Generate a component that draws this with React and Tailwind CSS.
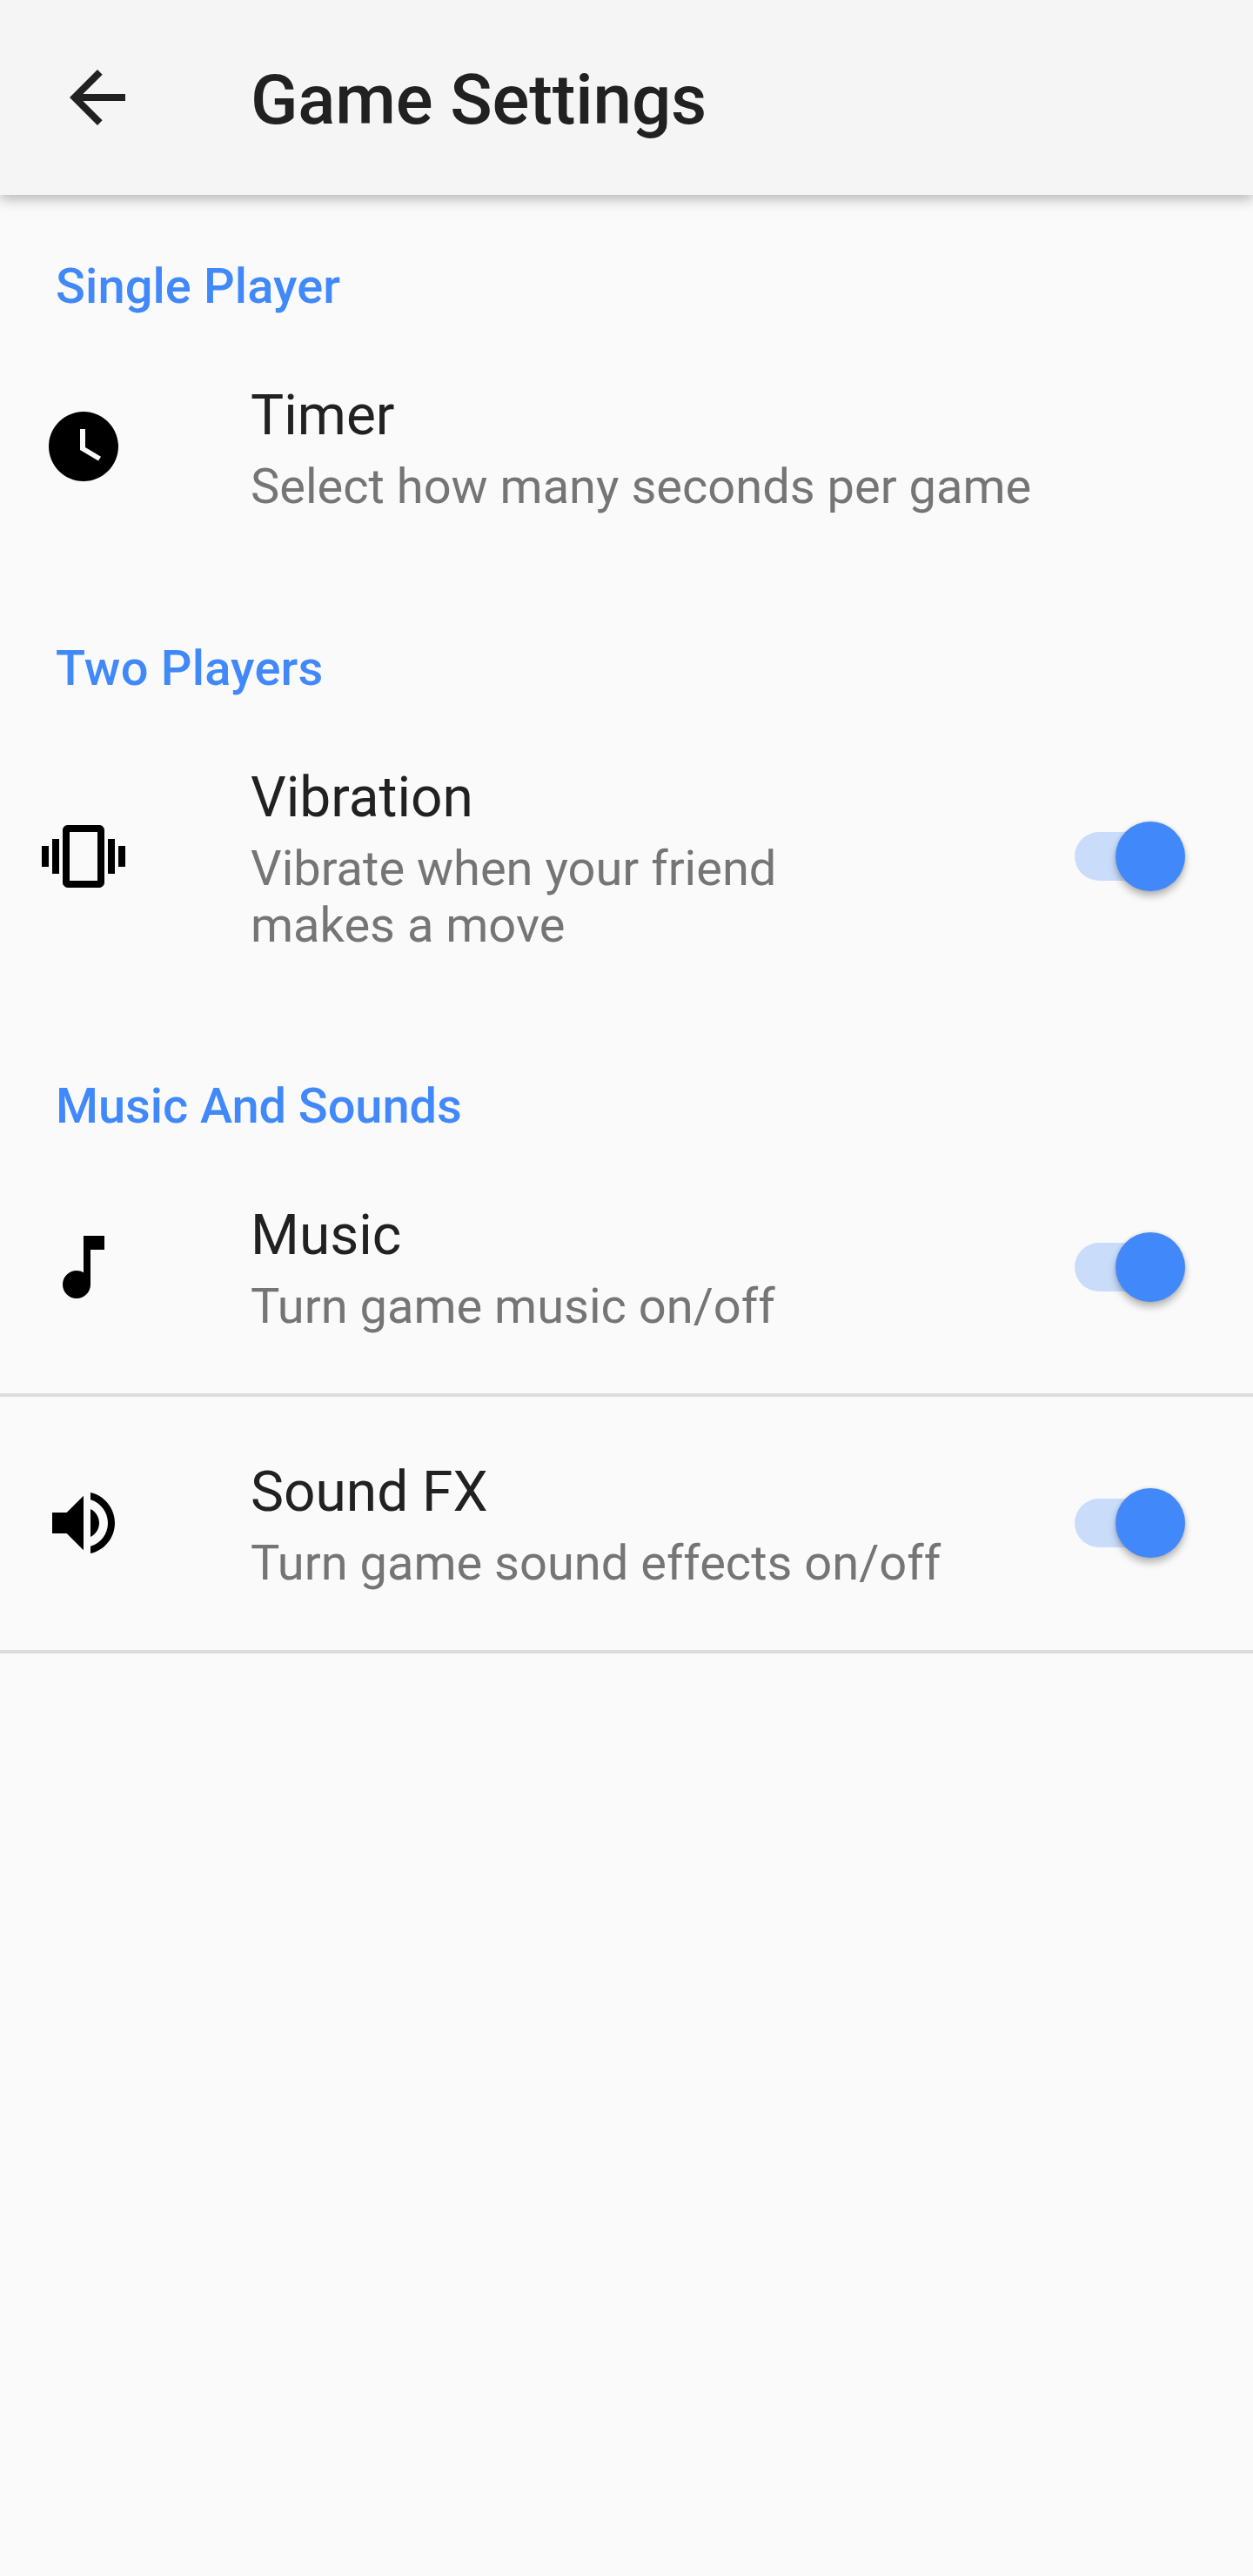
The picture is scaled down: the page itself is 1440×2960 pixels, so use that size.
const ICONS = {
  back: 'M20 11H7.83l5.59-5.59L12 4l-8 8 8 8 1.41-1.41L7.83 13H20v-2z',
  clock:
    'M12 2C6.5 2 2 6.5 2 12s4.5 10 10 10 10-4.5 10-10S17.5 2 12 2zm4.25 14.15L11 13V7h1.5v5.25l4.5 2.67-.75 1.23z',
  vibration:
    'M0 15h2V9H0v6zm3 2h2V7H3v10zm19-8v6h2V9h-2zm-3 8h2V7h-2v10zM16.5 3h-9C6.67 3 6 3.67 6 4.5v15c0 .83.67 1.5 1.5 1.5h9c.83 0 1.5-.67 1.5-1.5v-15c0-.83-.67-1.5-1.5-1.5zM16 19H8V5h8v14z',
  note: 'M12 3v10.55c-.59-.34-1.27-.55-2-.55-2.21 0-4 1.79-4 4s1.79 4 4 4 4-1.79 4-4V7h4V3h-6z',
  volume:
    'M3 9v6h4.17L12 19.83V4.17L7.17 9H3zm13.5 3c0-1.77-1.02-3.29-2.5-4.03v8.05c1.48-.73 2.5-2.25 2.5-4.02zM14 3.23v2.06c2.89.86 5 3.54 5 6.71s-2.11 5.85-5 6.71v2.06c4.01-.91 7-4.49 7-8.77s-2.99-7.86-7-8.77z',
};

function Icon({ name }) {
  return (
    <svg viewBox="0 0 24 24" className="size-24 shrink-0 fill-current" aria-hidden="true">
      <path d={ICONS[name]} />
    </svg>
  );
}

function Switch() {
  return (
    <button
      role="switch"
      aria-checked="true"
      className="mr-[78px] flex h-14 w-[127.5px] shrink-0 items-center justify-end rounded-full bg-[#c9ddfb]"
    >
      <span className="size-20 shrink-0 rounded-full bg-[#4189fa] shadow-[0_6px_8px_rgba(0,0,0,0.26),0_0_4px_rgba(0,0,0,0.12)]" />
    </button>
  );
}

function Category({ tracking, children }) {
  return (
    <h2
      className={`h-36 pt-[72px] pl-16 text-[56px] leading-[66px] font-medium text-[#4189fa] ${tracking}`}
    >
      {children}
    </h2>
  );
}

function Row({ icon, title, toggle, divider, children }) {
  return (
    <div className={divider ? 'border-b-4 border-[#dcdcdc]' : 'border-b-4 border-transparent'}>
      <div className="flex items-center pl-12">
        <div className="mr-36 text-black">
          <Icon name={icon} />
        </div>
        <div className="grow pt-[72px] pb-[66.67px]">
          <h3 className="text-[64px] leading-[76px] text-[#212121]">{title}</h3>
          <p className="mt-[11px] text-[56px] leading-[65px] text-[#757575]">{children}</p>
        </div>
        {toggle && <Switch />}
      </div>
    </div>
  );
}

export default function App() {
  return (
    <div className="min-h-[2960px] w-[1440px] bg-[#fafafa] font-['Roboto',sans-serif]">
      <header className="relative flex h-56 items-center bg-[#f5f5f5] pl-16 text-[#212121] shadow-[0_5px_14px_rgba(0,0,0,0.27)]">
        <Icon name="back" />
        <h1 className="ml-32 pt-1.5 text-[80px] leading-[94px] font-medium tracking-[-0.15px]">
          Game Settings
        </h1>
      </header>
      <main>
        <Category tracking="tracking-[0.1px]">Single Player</Category>
        <Row icon="clock" title="Timer">
          Select how many seconds per game
        </Row>
        <Category tracking="tracking-[0.2px]">Two Players</Category>
        <Row icon="vibration" title="Vibration" toggle>
          Vibrate when your friend
          <br />
          makes a move
        </Row>
        <Category tracking="tracking-[-0.08px]">Music And Sounds</Category>
        <Row icon="note" title="Music" toggle divider>
          Turn game music on/off
        </Row>
        <Row icon="volume" title="Sound FX" toggle divider>
          Turn game sound effects on/off
        </Row>
      </main>
    </div>
  );
}
